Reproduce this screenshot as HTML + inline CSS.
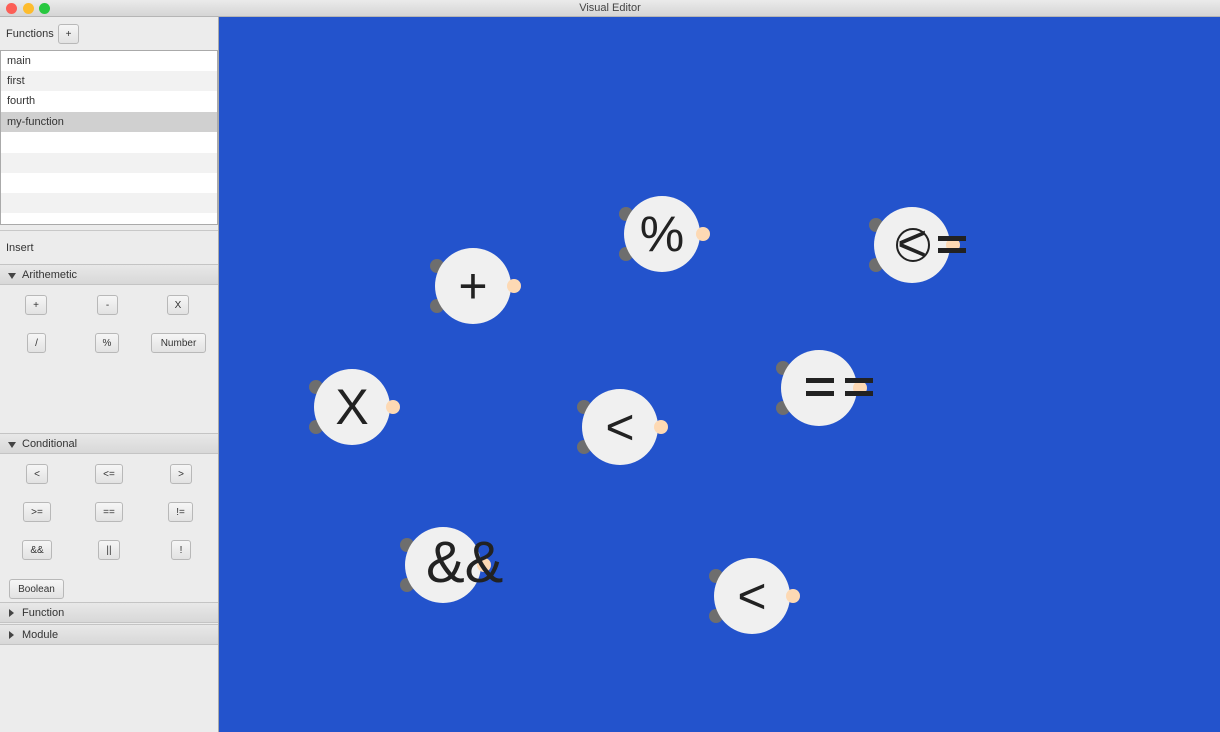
<!DOCTYPE html><html><head><style>
body{margin:0;width:1220px;height:732px;overflow:hidden;font-family:"Liberation Sans",sans-serif;background:#ececec;position:relative}
.title{position:absolute;left:0;top:0;width:1220px;height:16px;background:linear-gradient(#ebebeb,#d5d5d5);border-bottom:1px solid #b5b5b5;text-align:center;font-size:11px;line-height:16px;color:#444}
.dot{position:absolute;top:3px;width:11px;height:11px;border-radius:50%}
.side{position:absolute;left:0;top:17px;width:218px;height:715px;background:#ececec;border-right:1px solid #aaa;font-size:11px;color:#333}
.canvas{position:absolute;left:219px;top:17px;width:1001px;height:715px;background:#2353cc}
.btn{position:absolute;height:20px;border:1px solid #b8b8b8;border-radius:3px;background:linear-gradient(#f6f6f6,#e2e2e2);font-size:10px;line-height:20px;text-align:center;color:#333;box-sizing:border-box}
.row{position:absolute;left:0;width:100%;height:20px;line-height:20px;padding-left:6px;box-sizing:border-box}
.hdr{position:absolute;left:0;width:218px;height:21px;background:linear-gradient(#e8e8e8,#d8d8d8);border-top:1px solid #c4c4c4;border-bottom:1px solid #c4c4c4;line-height:21px;padding-left:22px;box-sizing:border-box}
.hdr:before{content:"";position:absolute;left:8px;top:8px;border-left:4px solid transparent;border-right:4px solid transparent;border-top:6px solid #444}
.hdr.c:before{left:9px;top:6px;border-top:4px solid transparent;border-bottom:4px solid transparent;border-left:5px solid #444;border-right:0}
.n{position:absolute;width:76px;height:76px;border-radius:50%;background:#f0f0f0;text-align:center;font-size:50px;line-height:76px;color:#222}
.g{position:absolute;width:14px;height:14px;border-radius:50%;background:#6e6e6e}
.p{position:absolute;width:14px;height:14px;border-radius:50%;background:#fdd9b4}
.t{position:absolute;font-size:52px;color:#222;white-space:nowrap;line-height:60px}
</style></head><body>
<div class="title">Visual Editor
<div class="dot" style="left:6px;background:#fc5f57"></div><div class="dot" style="left:23px;background:#fdbc2e"></div><div class="dot" style="left:39px;background:#28c840"></div></div>
<div class="side">
<div style="position:absolute;left:6px;top:11px">Functions</div>
<div class="btn" style="left:58px;top:7px;width:21px">+</div>
<div style="position:absolute;left:0;top:33px;width:218px;height:175px;background:#fff;border:1px solid #aaa;box-sizing:border-box;overflow:hidden">
<div class="row" style="top:0">main</div>
<div class="row" style="top:20px;background:#f2f2f2">first</div>
<div class="row" style="top:40px">fourth</div>
<div class="row" style="top:61px;background:#d0d0d0">my-function</div>
<div class="row" style="top:102px;background:#f2f2f2"></div>
<div class="row" style="top:142px;background:#f2f2f2"></div>
</div>
<div style="position:absolute;left:0;top:213px;width:218px;border-top:1px solid #c8c8c8"></div>
<div style="position:absolute;left:6px;top:225px">Insert</div>
<div class="hdr" style="top:247px">Arithemetic</div>
<div class="btn" style="left:25px;top:278px;width:22px">+</div>
<div class="btn" style="left:97px;top:278px;width:21px">-</div>
<div class="btn" style="left:167px;top:278px;width:22px">X</div>
<div class="btn" style="left:27px;top:316px;width:19px">/</div>
<div class="btn" style="left:95px;top:316px;width:24px">%</div>
<div class="btn" style="left:151px;top:316px;width:55px">Number</div>
<div class="hdr" style="top:416px">Conditional</div>
<div class="btn" style="left:26px;top:447px;width:22px">&lt;</div>
<div class="btn" style="left:95px;top:447px;width:28px">&lt;=</div>
<div class="btn" style="left:170px;top:447px;width:22px">&gt;</div>
<div class="btn" style="left:23px;top:485px;width:28px">&gt;=</div>
<div class="btn" style="left:95px;top:485px;width:28px">==</div>
<div class="btn" style="left:168px;top:485px;width:25px">!=</div>
<div class="btn" style="left:22px;top:523px;width:30px">&amp;&amp;</div>
<div class="btn" style="left:98px;top:523px;width:22px">||</div>
<div class="btn" style="left:171px;top:523px;width:20px">!</div>
<div class="btn" style="left:9px;top:562px;width:55px">Boolean</div>
<div class="hdr c" style="top:585px">Function</div>
<div class="hdr c" style="top:607px">Module</div>
</div>
<div class="canvas"></div>
<div id="nodes"></div>
<script>
var d=[[473,286,"+"],[662,234,"%"],[912,245,""],[352,407,"X"],[620,427,"<"],[819,388,""],[443,565,""],[752,596,"<"]],h="";
d.forEach(function(a){var x=a[0],y=a[1];
h+='<div class="g" style="left:'+(x-43)+'px;top:'+(y-27)+'px"></div><div class="g" style="left:'+(x-43)+'px;top:'+(y+13)+'px"></div>';
h+='<div class="n" style="left:'+(x-38)+'px;top:'+(y-38)+'px">'+a[2].replace(/</g,"&lt;")+'</div>';
h+='<div class="p" style="left:'+(x+34)+'px;top:'+(y-7)+'px"></div>';});
h+='<div class="t" style="left:426px;top:533px;font-size:58px">&amp;&amp;</div>';
h+='<div class="t" style="left:897px;top:214px">&lt;</div>';
h+='<div style="position:absolute;left:938px;top:236px;width:28px;height:5px;background:#222"></div><div style="position:absolute;left:938px;top:248px;width:28px;height:5px;background:#222"></div>';
h+='<div style="position:absolute;left:896px;top:228px;width:34px;height:34px;border:2px solid #222;border-radius:50%;box-sizing:border-box"></div>';
h+='<div style="position:absolute;left:806px;top:378px;width:28px;height:5px;background:#222"></div><div style="position:absolute;left:806px;top:391px;width:28px;height:5px;background:#222"></div>';
h+='<div style="position:absolute;left:845px;top:378px;width:28px;height:5px;background:#222"></div><div style="position:absolute;left:845px;top:391px;width:28px;height:5px;background:#222"></div>';
document.getElementById("nodes").innerHTML=h;
</script>
</body></html>
